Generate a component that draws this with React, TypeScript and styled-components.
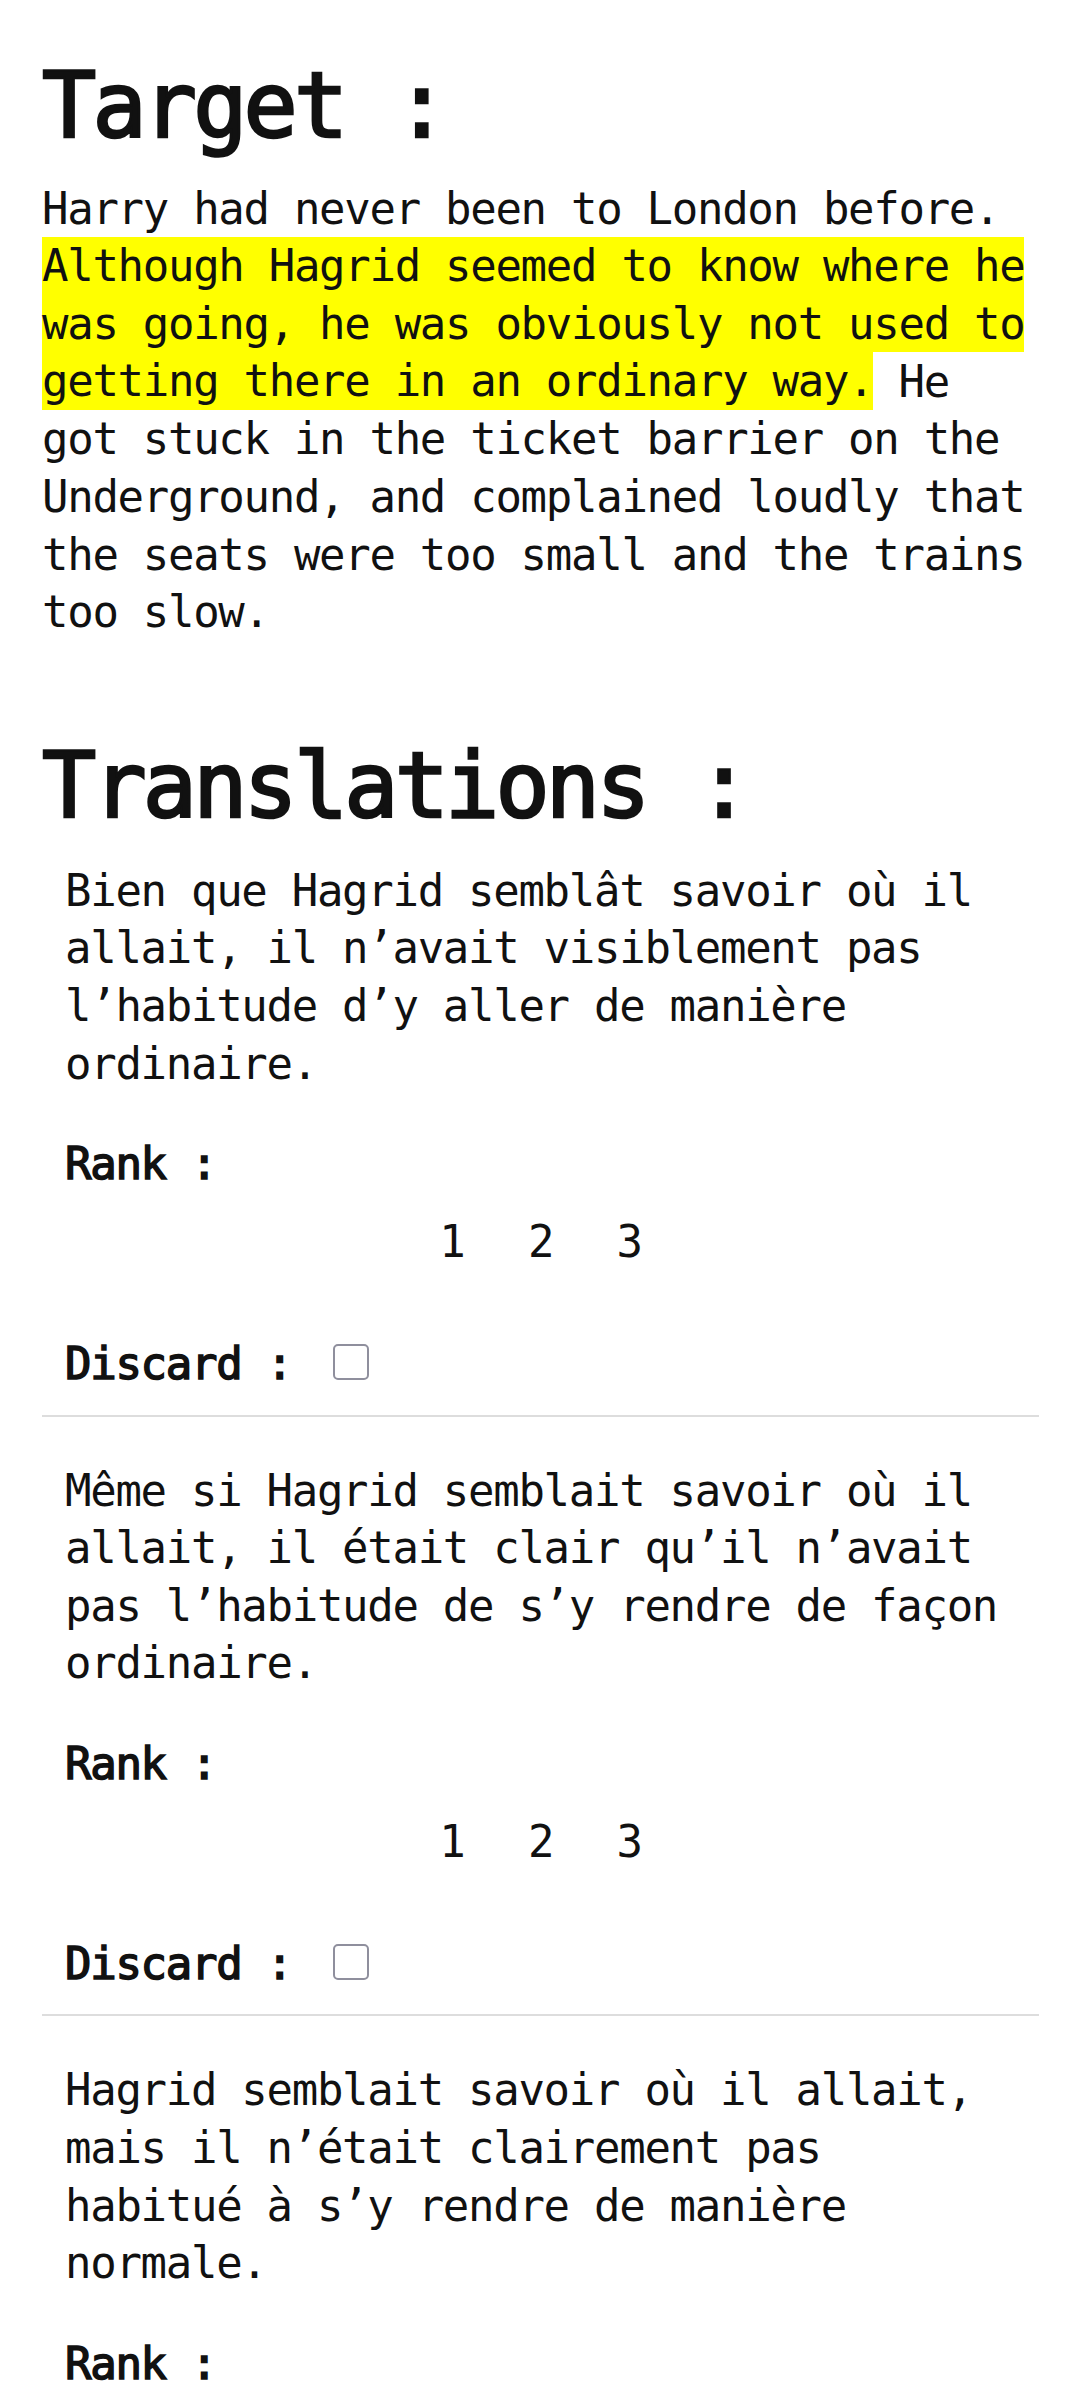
import React from "react";
import styled, { createGlobalStyle } from "styled-components";

const GlobalStyle = createGlobalStyle`
  html, body {
    margin: 0;
    padding: 0;
    background: #ffffff;
  }
  body {
    font-family: "DejaVu Sans Mono", "Liberation Mono", monospace;
    color: #111111;
  }
  * { box-sizing: border-box; }
`;

const Page = styled.main`
  display: flex;
  flex-direction: column;
  padding: 52px 42px 42px;
`;

const Heading = styled.h1<{ $spaced?: boolean }>`
  margin: ${(p) => (p.$spaced ? "91px 0 0" : "0")};
  font-size: 90px;
  line-height: 108px;
  font-weight: 400;
  -webkit-text-stroke: 2.6px #111111;
  letter-spacing: -3.8px;
  color: #111111;
`;

const Passage = styled.p`
  margin: 20px 0 0;
  font-size: 44px;
  line-height: 57.6px;
  letter-spacing: -1.3px;
`;

const Highlight = styled.mark`
  background: #ffff00;
  color: inherit;
  padding: 3.3px 0;
`;

const CardList = styled.section`
  display: flex;
  flex-direction: column;
  gap: 23px;
`;

const Card = styled.article`
  display: flex;
  flex-direction: column;
  padding: 22px 23px;
  border-bottom: 2px solid #dddddd;
`;

const TranslationText = styled.p`
  margin: 0;
  font-size: 44px;
  line-height: 57.6px;
  letter-spacing: -1.3px;
`;

const FieldLabel = styled.span`
  font-size: 44px;
  line-height: 57.6px;
  letter-spacing: -1.3px;
  font-weight: 400;
  -webkit-text-stroke: 1.5px #111111;
`;

const RankBlock = styled.div`
  display: flex;
  flex-direction: column;
  margin-top: 43px;
`;

const RankOptions = styled.div`
  display: flex;
  justify-content: center;
  gap: 63.5px;
  margin-top: 20px;
`;

const RankOption = styled.label`
  font-size: 44px;
  line-height: 57.6px;
  letter-spacing: -1.3px;
  cursor: pointer;
`;

const DiscardRow = styled.label`
  display: flex;
  align-items: center;
  gap: 41px;
  margin-top: 64.7px;
`;

const Checkbox = styled.input`
  appearance: none;
  -webkit-appearance: none;
  margin: -3px 0 0 0;
  width: 36px;
  height: 36px;
  border: 2.6px solid #8f8f9d;
  border-radius: 5px;
  background: #ffffff;
  flex-shrink: 0;
`;

const translations = [
  "Bien que Hagrid semblât savoir où il allait, il n’avait visiblement pas l’habitude d’y aller de manière ordinaire.",
  "Même si Hagrid semblait savoir où il allait, il était clair qu’il n’avait pas l’habitude de s’y rendre de façon ordinaire.",
  "Hagrid semblait savoir où il allait, mais il n’était clairement pas habitué à s’y rendre de manière normale.",
];

export default function App() {
  return (
    <>
      <GlobalStyle />
      <Page>
        <Heading>Target :</Heading>
        <Passage>
          Harry had never been to London before.{" "}
          <Highlight>
            Although Hagrid seemed to know where he was going, he was obviously
            not used to getting there in an ordinary way.
          </Highlight>{" "}
          He got stuck in the ticket barrier on the Underground, and complained
          loudly that the seats were too small and the trains too slow.
        </Passage>
        <Heading as="h2" $spaced>
          Translations :
        </Heading>
        <CardList>
          {translations.map((t, i) => (
            <Card key={i}>
              <TranslationText>{t}</TranslationText>
              <RankBlock>
                <FieldLabel>Rank :</FieldLabel>
                <RankOptions>
                  {[1, 2, 3].map((n) => (
                    <RankOption key={n}>{n}</RankOption>
                  ))}
                </RankOptions>
              </RankBlock>
              <DiscardRow>
                <FieldLabel>Discard :</FieldLabel>
                <Checkbox type="checkbox" />
              </DiscardRow>
            </Card>
          ))}
        </CardList>
      </Page>
    </>
  );
}
